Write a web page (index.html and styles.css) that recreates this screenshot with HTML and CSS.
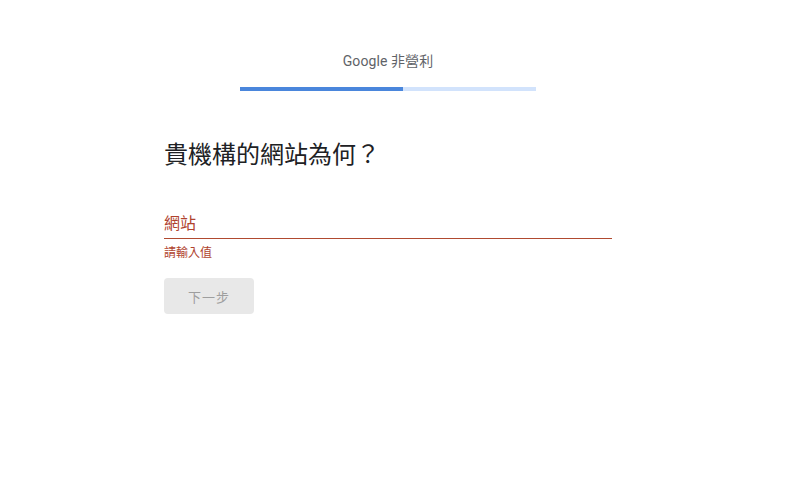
FILE: index.html
```html
<!DOCTYPE html>
<html lang="zh-Hant">
<head>
<meta charset="utf-8">
<title>Google 非營利</title>
<link rel="stylesheet" href="styles.css">
</head>
<body>
<div class="page">
  <header class="top">
    <div class="brand">Google 非營利</div>
    <div class="progress"><div class="progress-fill" style="width:55%"></div></div>
  </header>
  <main class="form">
    <h1 class="title">貴機構的網站為何？</h1>
    <div class="field">
      <label class="field-label" for="site">網站</label>
      <input class="field-input" id="site" type="text" value="">
      <div class="field-error">請輸入值</div>
    </div>
    <button class="next" type="button" disabled>下一步</button>
  </main>
</div>
</body>
</html>
```
FILE: styles.css
```css
html, body {
  margin: 0;
  padding: 0;
  background: #fff;
}
body {
  font-family: Roboto, "Noto Sans CJK TC", "Noto Sans", sans-serif;
  color: #202124;
}
.page {
  width: 776px;
  display: flex;
  flex-direction: column;
  align-items: center;
}
.top {
  display: flex;
  flex-direction: column;
  align-items: center;
  padding-top: 51px;
}
.brand {
  font-size: 14px;
  line-height: 20px;
  color: #5f6368;
  letter-spacing: 0.1px;
}
.progress {
  margin-top: 16px;
  width: 296px;
  height: 4px;
  background: #d2e3fc;
}
.progress-fill {
  height: 100%;
  background: #4a86dc;
}
.form {
  width: 448px;
  display: flex;
  flex-direction: column;
  align-items: flex-start;
}
.title {
  margin: 48px 0 0;
  font-size: 24px;
  line-height: 32px;
  font-weight: 400;
  color: #202124;
}
.field {
  margin-top: 41px;
  width: 100%;
  position: relative;
}
.field-label {
  display: block;
  font-size: 16px;
  line-height: 24px;
  color: #b0432e;
}
.field-input {
  position: absolute;
  left: 0;
  top: 0;
  width: 100%;
  height: 24px;
  border: 0;
  background: transparent;
  outline: none;
  padding: 0;
}
.field-error {
  border-top: 1px solid #b04a30;
  margin-top: 2px;
  padding-top: 7px;
  font-size: 12px;
  line-height: 14px;
  color: #b0432e;
}
.next {
  margin-top: 18px;
  width: 90px;
  height: 36px;
  border: 0;
  border-radius: 4px;
  background: #e8e8e8;
  color: #9e9e9e;
  font-family: Roboto, "Noto Sans CJK TC", sans-serif;
  font-size: 13px;
  letter-spacing: 1px;
  cursor: default;
}
```
